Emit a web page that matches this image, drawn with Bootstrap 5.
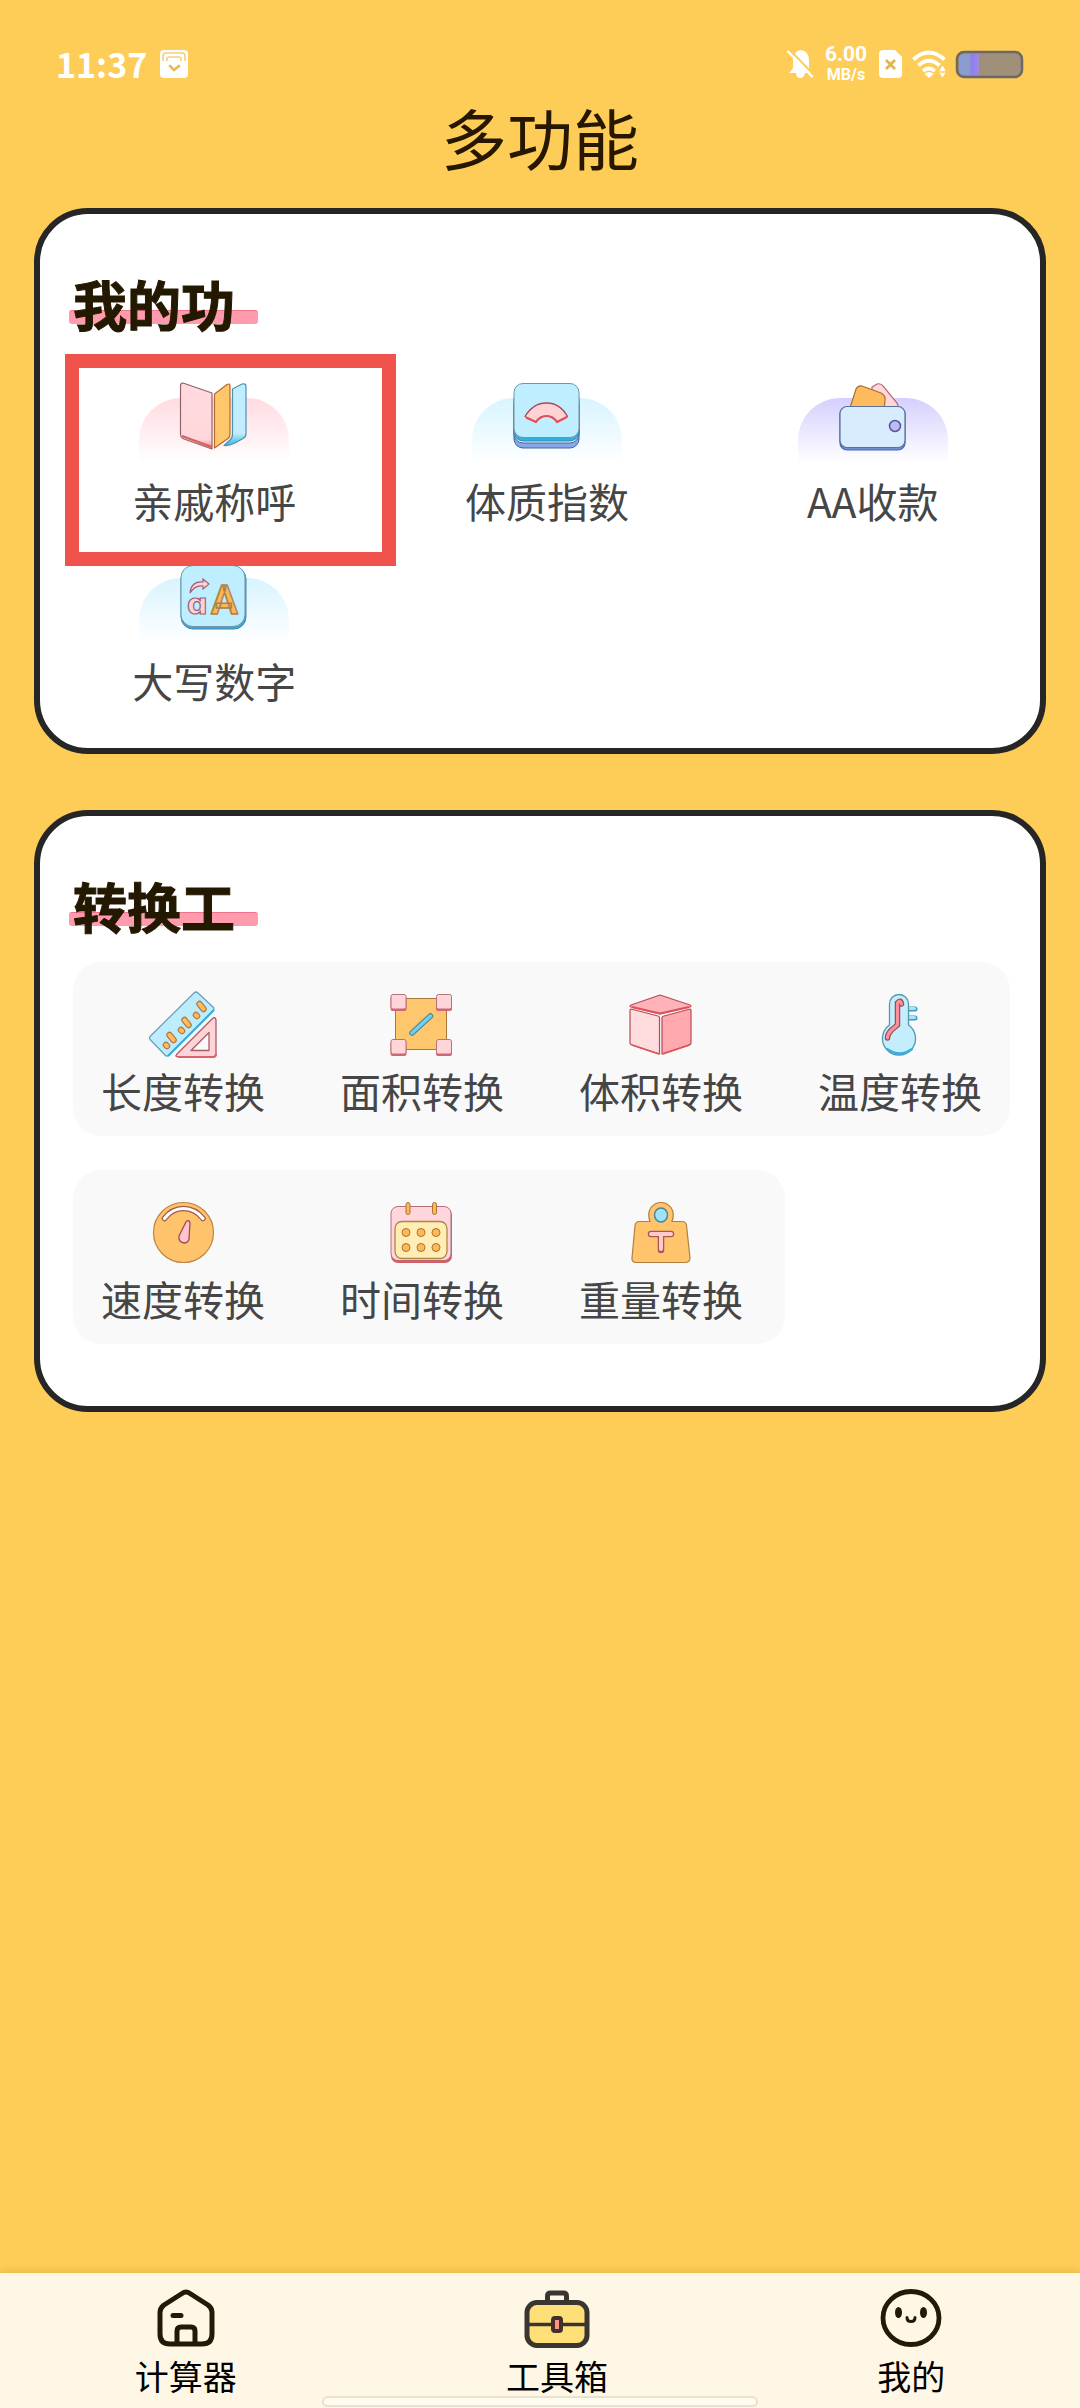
<!DOCTYPE html>
<html lang="zh-CN">
<head>
<meta charset="utf-8">
<meta name="viewport" content="width=device-width, initial-scale=1">
<title>多功能</title>
<link href="https://cdn.jsdelivr.net/npm/bootstrap@5.3.0/dist/css/bootstrap.min.css" rel="stylesheet">
<style>
  body { background: #fecd57; font-family: "Noto Sans CJK SC", sans-serif; color: #464646; }
  a { color: inherit; text-decoration: none; }
  svg { display: block; overflow: visible; flex: none; }
  .status-row { height: 48px; margin-top: 40px; padding: 0 57px 0 56px; color: #fff; }
  .clock { font-size: 34px; line-height: 48px; font-weight: 700; margin-right: 13px; }
  .status-icons { gap: 10px; }
  .net-speed { font-family: Roboto, sans-serif; font-weight: 700; text-align: center; width: 46px; }
  .net-speed .rate { font-size: 21px; line-height: 22px; }
  .net-speed .unit { font-size: 16px; line-height: 20px; }
  .page-title { font-size: 66px; line-height: 96px; margin: 0 0 24px; font-weight: 400; color: #281700; }
  .panel { background: #fff; border: 6px solid #262626; border-radius: 54px; margin: 0 34px 56px; padding-top: 60px; }
  .section-title { font-size: 54px; line-height: 60px; font-weight: 700; color: #231800; margin: 0 0 0 33px; -webkit-text-stroke: 1px #231800; }
  .section-title span { position: relative; z-index: 0; display: inline-block; }
  .section-title span::before { content: ""; position: absolute; z-index: -1; left: -4px; right: -23px; top: 36px; height: 14px; border-radius: 3px; background: #ff9bac; border-top: 1px solid #f2738a; }
  .tool-grid { display: grid; grid-template-columns: auto auto auto; row-gap: 34px; padding: 48px 8px 40px; }
  .tool-item, .conv-item { font-size: 41px; line-height: 56px; }
  .halo-wrap { position: relative; width: 150px; height: 84px; margin-bottom: 6px; display: flex; justify-content: center; }
  .halo-wrap::before { content: ""; position: absolute; inset: 16px 0 0; border-radius: 42px 42px 0 0; background: linear-gradient(var(--tint), #fff 95%); }
  .halo-wrap svg { position: relative; }
  .tint-pink { --tint: #ffdbe1; }
  .tint-sky { --tint: #d8f4ff; }
  .tint-violet { --tint: #d4d0fe; }
  .picked { position: relative; }
  .picked::after { content: ""; position: absolute; left: 17px; right: -15px; top: -28px; bottom: -38px; border: 14px solid #ef534c; z-index: 2; }
  .conv-list { padding: 26px 30px 62px 33px; gap: 34px; }
  .conv-row { background: #f9f9f9; border-radius: 28px; padding: 28px 28px 18px; gap: 75px; }
  .conv-row.short { width: 76%; }
  .tab-bar { background: #fff7e5; padding: 15px 0 12px; position: relative; box-shadow: 0 0 10px rgba(120, 90, 20, .25); color: #000; font-size: 34px; line-height: 40px; }
  .tab-bar svg { margin-bottom: 8px; }
  .home-pill { position: absolute; bottom: 1px; left: 50%; width: 436px; max-width: 60%; height: 11px; margin-left: -218px; border: 2px solid #e9e2d3; border-radius: 6px; background: #fffbef; }
</style>
</head>
<body>
<svg width="0" height="0" class="position-absolute" aria-hidden="true">
  <defs>
    <linearGradient id="ice" x1="0" y1="0" x2="0" y2="1"><stop offset="0" stop-color="#beeeff"/><stop offset=".8" stop-color="#c4edfd"/><stop offset="1" stop-color="#38b4e4"/></linearGradient>
    <linearGradient id="rose" x1="0" y1="0" x2="0" y2="1"><stop offset="0" stop-color="#ffdade"/><stop offset=".85" stop-color="#ffd8dc"/><stop offset="1" stop-color="#f58088"/></linearGradient>
    <linearGradient id="charge"><stop offset="0" stop-color="#869bd6"/><stop offset=".5" stop-color="#8e9cc8"/><stop offset=".65" stop-color="#8b7ff5"/><stop offset="1" stop-color="#a08ad8"/></linearGradient>
  </defs>
</svg>
<div class="d-flex flex-column min-vh-100">
  <header>
    <div class="status-row d-flex align-items-center">
      <span class="clock">11:37</span>
      <svg width="28" height="28" viewBox="0 0 28 28"><rect width="28" height="28" rx="4" fill="#fff"/><path d="M3 11V6q0-3 3-3h16q3 0 3 3v5M7 11V9q0-2 2-2h10q2 0 2 2v2" fill="none" stroke="#f6cf78" stroke-width="1.6"/><path d="M10 16l4 4 5-4" fill="none" stroke="#e7bb55" stroke-width="2.6" stroke-linecap="round"/></svg>
      <div class="status-icons ms-auto d-flex align-items-center">
        <svg width="26" height="28" viewBox="0 0 26 28"><path d="M4 21l2-3V11q0-10 8-11 8 1 8 11v7l2 3v2H18q-1 5-5 5t-4-5H2z" fill="#fff"/><path d="M2 -1l25 26" stroke="#fecd57" stroke-width="2"/><path d="M1 1.500l24 25" stroke="#fff" stroke-width="2.400" stroke-linecap="round"/></svg>
        <div class="net-speed"><div class="rate">6.00</div><div class="unit">MB/s</div></div>
        <svg width="23" height="28" viewBox="0 0 23 28"><path d="M4 0h12l7 7v17q0 4-4 4H4q-4 0-4-4V4q0-4 4-4z" fill="#fff"/><path d="M7 10l9 9M16 10l-9 9" stroke="#e3b548" stroke-width="2.800"/></svg>
        <svg width="34" height="28" viewBox="0 0 34 28"><g fill="none" stroke="#fff" stroke-width="3.800"><path d="M1.500 9.500q15-14 31 0M6.500 15.500q10.500-9.500 21 0M11 21q6-5 12 0"/></g><path d="M12.500 24q4.500-4 9 0L17 28z" fill="#fff"/><path d="M26 22l4.500-8 4.500 8zM26 22h9L30.500 29z" fill="#fff" stroke="#fecd57" stroke-width="1.500"/></svg>
        <svg width="67" height="27" viewBox="0 0 67 27"><rect x="1" y="1" width="65" height="25" rx="7" fill="#a19079" stroke="#6e6763" stroke-width="2.500"/><path d="M8 3h15v21H8q-5 0-5-5V8q0-5 5-5z" fill="url(#charge)"/></svg>
      </div>
    </div>
    <h1 class="page-title text-center">多功能</h1>
  </header>

  <main>
    <section class="panel" id="mine">
      <h2 class="section-title"><span>我的功</span></h2>
      <div class="tool-grid">
        <a href="#" class="tool-item picked d-flex flex-column align-items-center">
          <span class="halo-wrap tint-pink"><svg width="68" height="68" viewBox="0 0 68 68" stroke-width="1.200" stroke-linejoin="round"><path d="M3 1L32 11V67L4 57Q.5 55.500.500 52V4Q.500 1 3 1z" fill="url(#rose)" stroke="#8f6468"/><path d="M2 54l30 11" stroke="#dd5a60" stroke-width="2" fill="none"/><path d="M34.500 12L47 2.500Q50 1 50 4V52q0 3-2 4.500L34.500 66z" fill="#ffc76c" stroke="#b8682c"/><path d="M52.500 7L62 2q4-1 4 2.500V52q0 3-3 4.500L55 61q-6 3-11 2.500L50 58q2.500-2 2.500-6z" fill="url(#ice)" stroke="#4e93ad"/></svg></span>
          <span>亲戚称呼</span>
        </a>
        <a href="#" class="tool-item d-flex flex-column align-items-center">
          <span class="halo-wrap tint-sky"><svg width="68" height="68" viewBox="0 0 68 68"><rect x="1" y="16" width="65" height="50" rx="9" fill="#86a7e8" stroke="#47659e"/><rect x="1" y="12" width="65" height="49" rx="9" fill="#edf8ff" stroke="#47659e"/><rect x="1" y="8" width="65" height="51" rx="9" fill="#31b1db" stroke="#2e8fb0"/><rect x="1" y="1.500" width="65" height="54" rx="9" fill="#beeeff" stroke="#6f95a8"/><path d="M12 34.500Q20 21 33.500 21T54.500 34.500L44 40q-4-6-10.500-6T23 40z" fill="#ffd2d5" stroke="#a94a53" stroke-width="1.300" stroke-linejoin="round"/><path d="M13 35.500l10 4.500q4-6 10.500-6T44 40l10-5" fill="none" stroke="#e4505a" stroke-width="2.200" stroke-linejoin="round"/></svg></span>
          <span>体质指数</span>
        </a>
        <a href="#" class="tool-item d-flex flex-column align-items-center">
          <span class="halo-wrap tint-violet"><svg width="68" height="68" viewBox="0 0 68 68" stroke-width="1.200"><path d="M33 5l5-3q4-1 6 2l14 17q2 3 0 6H33z" fill="#ffd6da" stroke="#b9636c"/><path d="M11 26L17 7q2-4 6-3l19 7q5 3 4 7l-1 10z" fill="#fdbb5b" stroke="#a9702b"/><rect x="1" y="25" width="65" height="43" rx="7" fill="#6e8fd6" stroke="#4a6aa4"/><rect x="1" y="24.500" width="65" height="41" rx="7" fill="#d8ecfe" stroke="#5b709c"/><circle cx="56" cy="44" r="5.500" fill="#bbbcf6" stroke="#58558f" stroke-width="1.500"/></svg></span>
          <span>AA收款</span>
        </a>
        <a href="#" class="tool-item d-flex flex-column align-items-center">
          <span class="halo-wrap tint-sky"><svg width="68" height="68" viewBox="0 0 68 68"><rect x="1" y="5" width="65" height="62" rx="12" fill="#39a9dc" stroke="#4886a5"/><rect x="1" y="3.500" width="64" height="61" rx="12" fill="#beeeff" stroke="#6f95a8"/><path d="M10 31q1-12 13-11v-3l6 5-6 5v-3q-8-1-13 7z" fill="#ffd2d8" stroke="#a6606e" stroke-width="1.200"/><text x="7" y="52" font-family="DejaVu Sans" font-weight="700" font-size="29" fill="#ffd2d8" stroke="#9b6273" stroke-width="1.200">ɑ</text><text x="31" y="52" font-family="Roboto" font-weight="700" font-size="40" fill="#fdb653" stroke="#a98350" stroke-width="1.500" stroke-linejoin="round">A</text></svg></span>
          <span>大写数字</span>
        </a>
      </div>
    </section>

    <section class="panel" id="convert">
      <h2 class="section-title"><span>转换工</span></h2>
      <div class="conv-list d-flex flex-column">
        <div class="conv-row d-flex justify-content-between">
          <a href="#" class="conv-item d-flex flex-column align-items-center">
            <svg class="mb-1" width="68" height="68" viewBox="0 0 68 68" stroke-linejoin="round"><path d="M45 3q2-2 4 0L64 17q2 2 0 4L20 65q-2 2-4 0L1.500 50q-2-2 0-4z" fill="#bcecfd" stroke="#6a9db5" stroke-width="1.200"/><path d="M65 20L19 66" stroke="#32addf" stroke-width="2"/><g stroke="#b4793d" stroke-width="6.500" stroke-linecap="round"><path d="M50.500 14l4 5M35.500 30l4 5M20.500 45l4 5M47 25l1 1M32 40l1 1M17 55l1 1"/></g><g stroke="#ffbc60" stroke-width="4" stroke-linecap="round"><path d="M50.500 14l4 5M35.500 30l4 5M20.500 45l4 5M47 25l1 1M32 40l1 1M17 55l1 1"/></g><path d="M63 29q3-3 4 1V64q0 3-3 3H30q-5 0-2-3zM60 42.500L42 60.500H60z" fill="#ffd4d8" fill-rule="evenodd" stroke="#a85c67" stroke-width="1.300"/><path d="M29 67H64q3 0 3-3" fill="none" stroke="#dd626e" stroke-width="2"/></svg>
            <span>长度转换</span></a>
          <a href="#" class="conv-item d-flex flex-column align-items-center">
            <svg class="mb-1" width="68" height="68" viewBox="0 0 68 68"><rect x="7.500" y="8.500" width="51" height="51" fill="#ffc76d" stroke="#a9783e"/><g fill="#de626c"><rect x="2.500" y="6" width="16" height="15" rx="2"/><rect x="48" y="6" width="16" height="15" rx="2"/><rect x="2.500" y="51" width="16" height="15" rx="2"/><rect x="48" y="51" width="16" height="15" rx="2"/></g><g fill="#ffd5da" stroke="#b3747b"><rect x="3" y="4.500" width="15" height="14.500" rx="2"/><rect x="48.500" y="4.500" width="15" height="14.500" rx="2"/><rect x="3" y="49.500" width="15" height="14.500" rx="2"/><rect x="48.500" y="49.500" width="15" height="14.500" rx="2"/></g><path d="M24 43l18.500-17" stroke="#467f8c" stroke-width="5.500" stroke-linecap="round"/><path d="M24 43l18.500-17" stroke="#6fd0f0" stroke-width="3.500" stroke-linecap="round"/></svg>
            <span>面积转换</span></a>
          <a href="#" class="conv-item d-flex flex-column align-items-center">
            <svg class="mb-1" width="68" height="68" viewBox="0 0 68 68" stroke="#b54c57" stroke-width="1.200" stroke-linejoin="round"><path d="M33 5L63 15q2 1 0 2L33 24 4 17q-2-1 0-2z" fill="#ffb3b9"/><path d="M4 19l27 7q1.500.5 1.500 2V64L5 55q-2-.5-2-2V20z" fill="#ffdcdd"/><path d="M63 19l-26 7q-2 .500-2 2V64l27-9q2-.5 2-2V20z" fill="#ffa9af"/><path d="M5 55l27 9M35.500 64l27-9M5 17l28 6.500L62 17" stroke="#df505b" stroke-width="1.800" fill="none"/></svg>
            <span>体积转换</span></a>
          <a href="#" class="conv-item d-flex flex-column align-items-center">
            <svg class="mb-1" width="68" height="68" viewBox="0 0 68 68" stroke-linecap="round"><path d="M40 19h9M40 28h9" stroke="#3b9bc0" stroke-width="5"/><path d="M40 18.500h8.500M40 27.500h8.500" stroke="#a8e3f8" stroke-width="3"/><path d="M23.500 14a9.500 9.500 0 0 1 19 0V35a16.500 16.500 0 1 1-19 0z" fill="#c5eefd" stroke="#5298ae" stroke-width="1.300"/><path d="M46 59q-12 9-25 0" stroke="#38afe0" stroke-width="2.500" fill="none"/><path d="M35.500 14q-1-5-4-1V35l-6 5q-4 4-4 8" fill="none" stroke="#8d4a58" stroke-width="5.500"/><path d="M35.500 14q-1-5-4-1V35l-6 5q-4 4-4 8" fill="none" stroke="#fb8f9b" stroke-width="3.200"/></svg>
            <span>温度转换</span></a>
        </div>
        <div class="conv-row short d-flex">
          <a href="#" class="conv-item d-flex flex-column align-items-center">
            <svg class="mb-1" width="68" height="68" viewBox="0 0 68 68"><circle cx="34.500" cy="34.500" r="30" fill="#ffc46b" stroke="#bd8342" stroke-width="1.200"/><path d="M15.500 20.500Q23 10.500 34.500 10.500t19.500 10" fill="none" stroke="#a15a4d" stroke-width="5.500" stroke-linecap="round"/><path d="M15.500 20.500Q23 10.500 34.500 10.500t19.500 10" fill="none" stroke="#fff" stroke-width="3.200" stroke-linecap="round"/><path d="M37 24q3-3 4 1l-1 16q-1 4-5 4-6-1-5-7z" fill="#ffc5cd" stroke="#a14e58" stroke-width="1.300"/></svg>
            <span>速度转换</span></a>
          <a href="#" class="conv-item d-flex flex-column align-items-center">
            <svg class="mb-1" width="68" height="68" viewBox="0 0 68 68"><rect x="3" y="10" width="61" height="55" rx="7" fill="#de5964"/><rect x="3" y="8.500" width="60" height="54" rx="7" fill="#ffd6db" stroke="#b26f78"/><rect x="7" y="23.500" width="52" height="37" rx="7" fill="#ffedb6" stroke="#b18443" stroke-width="1.300"/><g fill="#fdb753" stroke="#ad7231"><rect x="18" y="4.500" width="4" height="12" rx="2"/><rect x="44.500" y="4.500" width="4" height="12" rx="2"/><circle cx="18" cy="34.500" r="4"/><circle cx="33" cy="34.500" r="4"/><circle cx="48" cy="34.500" r="4"/><circle cx="18" cy="49.500" r="4"/><circle cx="33" cy="49.500" r="4"/><circle cx="48" cy="49.500" r="4"/></g></svg>
            <span>时间转换</span></a>
          <a href="#" class="conv-item d-flex flex-column align-items-center">
            <svg class="mb-1" width="68" height="68" viewBox="0 0 68 68"><path d="M23 23.500q-3-8 1-14 4-5 10-5t10 5q4 6 1 14h10q4 0 4.500 4L63 60q0 4-4 4.500H8.500Q4.500 64 5 60L8 27.500q.5-4 4.500-4z" fill="#ffc46c" stroke="#b0803f" stroke-width="1.200"/><ellipse cx="34" cy="17" rx="6.500" ry="7" fill="#9fe3f6" stroke="#45879b" stroke-width="1.500"/><path d="M24 36h20M34 36v16" stroke="#aa5657" stroke-width="6.500" stroke-linecap="round"/><path d="M24 36h20M34 36v15" stroke="#ffc9ce" stroke-width="4" stroke-linecap="round"/></svg>
            <span>重量转换</span></a>
        </div>
      </div>
    </section>
  </main>

  <nav class="tab-bar d-flex mt-auto">
    <a href="#" class="flex-fill d-flex flex-column align-items-center">
      <svg width="68" height="60" viewBox="0 0 68 60" fill="none" stroke="#231a06" stroke-width="5" stroke-linejoin="round" stroke-linecap="round"><path d="M30 5.500q4-3 8 0L56 17q4 3 4 7V46q0 10-10 10H18Q8 56 8 46V24q0-4 4-7zM25 55V43q0-4 4-4h10q4 0 4 4V55M21 27.500h8"/></svg>
      <span>计算器</span></a>
    <a href="#" class="flex-fill d-flex flex-column align-items-center" aria-current="page">
      <svg width="68" height="60" viewBox="0 0 68 60" stroke="#393530" stroke-width="5"><path d="M24.500 14V8q0-3 3-3h13q3 0 3 3v6" fill="none"/><rect x="4" y="14.500" width="60" height="43" rx="10" fill="#ffdf78"/><path d="M4 36.500h60" stroke-width="3.500"/><rect x="30" y="30" width="8" height="13" rx="2" fill="#ff9482" stroke="#42302a" stroke-width="4"/></svg>
      <span>工具箱</span></a>
    <a href="#" class="flex-fill d-flex flex-column align-items-center">
      <svg width="68" height="60" viewBox="0 0 68 60"><ellipse cx="34" cy="30" rx="28" ry="26.500" fill="none" stroke="#231a06" stroke-width="4.800"/><ellipse cx="21.500" cy="24.500" rx="3.500" ry="5.500" fill="#231a06"/><ellipse cx="46.500" cy="24.500" rx="3.500" ry="5.500" fill="#231a06"/><path d="M30 29.500q0 4 4 4t4-4" fill="none" stroke="#231a06" stroke-width="3" stroke-linecap="round"/></svg>
      <span>我的</span></a>
    <div class="home-pill"></div>
  </nav>
</div>
<script src="https://cdn.jsdelivr.net/npm/bootstrap@5.3.0/dist/js/bootstrap.bundle.min.js"></script>
</body>
</html>
